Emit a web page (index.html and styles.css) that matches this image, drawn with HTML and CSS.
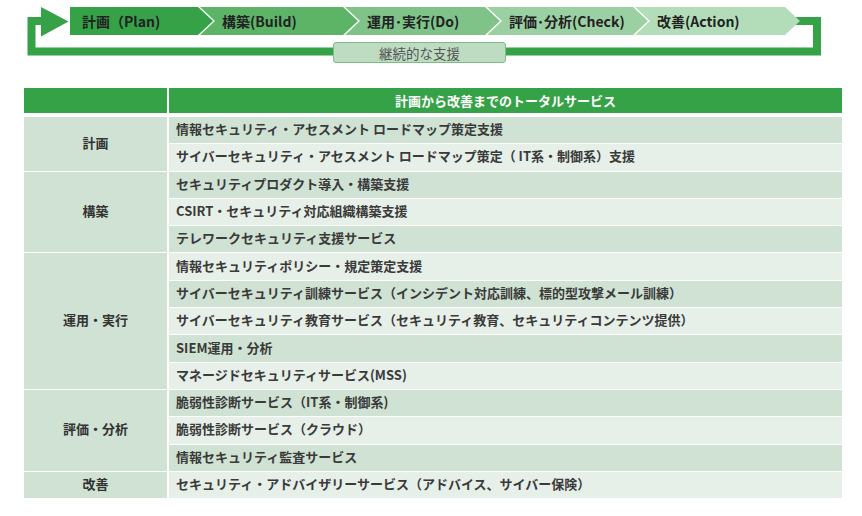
FILE: index.html
```html
<!DOCTYPE html>
<html lang="ja">
<head>
<meta charset="utf-8">
<title>サービス一覧</title>
<link rel="stylesheet" href="styles.css">
</head>
<body>
<div class="page">
  <div class="cycle">
    <svg class="loop" width="862" height="70" viewBox="0 0 862 70" aria-hidden="true">
      <path d="M796 21 H817 V51.5 H31.5 V21 H44" fill="none" stroke="#35a248" stroke-width="8"/>
      <polygon points="41,7 68.5,21.5 41,36.5" fill="#35a248"/>
    </svg>
    <div class="steps">
      <div class="step s1">計画（Plan)</div>
      <div class="step s2">構築(Build)</div>
      <div class="step s3">運用･実行(Do)</div>
      <div class="step s4">評価･分析(Check)</div>
      <div class="step s5">改善(Action)</div>
    </div>
    <div class="support">継続的な支援</div>
  </div>

  <div class="services">
    <div class="thead">
      <div class="th"></div>
      <div class="th">計画から改善までのトータルサービス</div>
    </div>
    <div class="tbody">
      <div class="label span2">計画</div>
      <div class="item dark">情報セキュリティ・アセスメント ロードマップ策定支援</div>
      <div class="item light">サイバーセキュリティ・アセスメント ロードマップ策定（ IT系・制御系）支援</div>

      <div class="label span3">構築</div>
      <div class="item dark">セキュリティプロダクト導入・構築支援</div>
      <div class="item light">CSIRT・セキュリティ対応組織構築支援</div>
      <div class="item dark">テレワークセキュリティ支援サービス</div>

      <div class="label span5">運用・実行</div>
      <div class="item light">情報セキュリティポリシー・規定策定支援</div>
      <div class="item dark">サイバーセキュリティ訓練サービス（インシデント対応訓練、標的型攻撃メール訓練）</div>
      <div class="item light">サイバーセキュリティ教育サービス（セキュリティ教育、セキュリティコンテンツ提供）</div>
      <div class="item dark">SIEM運用・分析</div>
      <div class="item light">マネージドセキュリティサービス(MSS)</div>

      <div class="label span3">評価・分析</div>
      <div class="item dark">脆弱性診断サービス（IT系・制御系)</div>
      <div class="item light">脆弱性診断サービス（クラウド）</div>
      <div class="item dark">情報セキュリティ監査サービス</div>

      <div class="label">改善</div>
      <div class="item light">セキュリティ・アドバイザリーサービス（アドバイス、サイバー保険）</div>
    </div>
  </div>
</div>
</body>
</html>
```

FILE: styles.css
```css
html, body {
  margin: 0;
  padding: 0;
  background: #ffffff;
}

body {
  font-family: "Noto Sans CJK JP", "Noto Sans", sans-serif;
  color: #333333;
}

.page {
  width: 862px;
}

/* ---- PDCA cycle ---- */
.cycle {
  position: relative;
  height: 88px;
  box-sizing: border-box;
  padding: 7px 0 0 70px;
}

.loop {
  position: absolute;
  left: 0;
  top: 0;
  z-index: 0;
}

.steps {
  position: relative;
  z-index: 1;
  display: flex;
  height: 28px;
}

.step {
  height: 28px;
  display: flex;
  align-items: center;
  box-sizing: border-box;
  padding-left: 22px;
  padding-bottom: 1px;
  font-size: 14px;
  font-weight: 700;
  color: #222222;
  white-space: nowrap;
  margin-left: -13px;
  clip-path: polygon(0 0, calc(100% - 15px) 0, 100% 50%, calc(100% - 15px) 100%, 0 100%, 15px 50%);
}

.s1 {
  width: 143px;
  margin-left: 0;
  padding-left: 12px;
  background: #35a248;
  clip-path: polygon(0 0, calc(100% - 15px) 0, 100% 50%, calc(100% - 15px) 100%, 0 100%);
}
.s2 { width: 158px; background: #5db467; }
.s3 { width: 155px; background: #7fc388; }
.s4 { width: 161px; background: #9bd0a2; }
.s5 { width: 165px; background: #b3ddb8; }

.support {
  position: relative;
  z-index: 1;
  margin: 7px 0 0 263px;
  width: 173px;
  height: 21px;
  box-sizing: border-box;
  border: 1px solid #7bbd85;
  border-radius: 3px;
  background: #bddcc2;
  color: #555555;
  font-size: 13.5px;
  display: flex;
  align-items: center;
  justify-content: center;
}

/* ---- Service table ---- */
.services {
  margin-left: 24px;
  width: 818px;
}

.thead,
.tbody {
  display: grid;
  grid-template-columns: 143px 1fr;
  column-gap: 2px;
}

.thead {
  height: 25px;
}

.th {
  background: #35a248;
  color: #ffffff;
  font-size: 13px;
  font-weight: 700;
  display: flex;
  align-items: center;
  justify-content: center;
  padding-bottom: 1px;
}

.tbody {
  margin-top: 4px;
  grid-auto-rows: 26.3px;
  row-gap: 1px;
}

.label {
  grid-column: 1;
  background: #cfe2d3;
  font-size: 13px;
  font-weight: 700;
  color: #333333;
  display: flex;
  align-items: center;
  justify-content: center;
  padding-bottom: 3px;
}

.span2 { grid-row: span 2; }
.span3 { grid-row: span 3; }
.span5 { grid-row: span 5; }

.item {
  grid-column: 2;
  font-size: 13px;
  font-weight: 700;
  color: #3a3a3a;
  display: flex;
  align-items: center;
  padding-left: 7px;
  padding-bottom: 3px;
  white-space: nowrap;
}

.dark { background: #cfe2d3; }
.light { background: #e6efe8; }
```
